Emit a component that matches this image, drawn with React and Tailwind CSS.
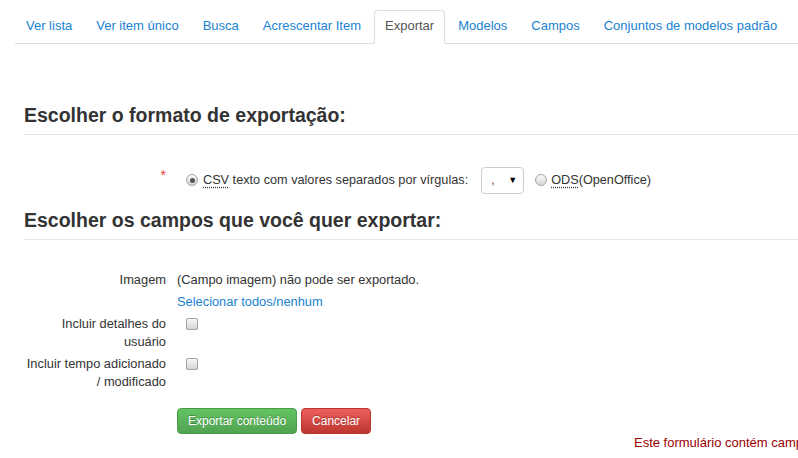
export default function App() {
  const tabs = [
    "Ver lista",
    "Ver item único",
    "Busca",
    "Acrescentar Item",
    "Exportar",
    "Modelos",
    "Campos",
    "Conjuntos de modelos padrão",
  ];

  const Radio = ({ checked, className = "" }) => (
    <span
      className={
        "inline-flex h-[12px] w-[12px] shrink-0 items-center justify-center rounded-full border border-[#a5a5a5] bg-gradient-to-b from-[#fbfbfb] to-[#d4d4d4] " +
        className
      }
    >
      {checked ? <span className="h-[5px] w-[5px] rounded-full bg-[#555]" /> : null}
    </span>
  );

  const Checkbox = () => (
    <span className="ml-[9px] inline-block h-[12px] w-[12px] shrink-0 rounded-[2px] border border-[#a0a0a0] bg-gradient-to-b from-[#f6f6f6] to-[#d6d6d6]" />
  );

  return (
    <div className="h-[458px] w-[798px] overflow-hidden bg-white font-['Liberation_Sans',Arial,sans-serif] text-[13px] leading-[18px] text-[#333]">
      <ul className="ml-[15px] mt-[10px] flex border-b border-[#ddd]">
        {tabs.map((t) => (
          <li key={t} className="-mb-px mr-[2px]">
            {t === "Exportar" ? (
              <span className="block rounded-t-[4px] border border-[#ddd] border-b-transparent bg-white px-[10px] pb-[7px] pt-[5px] leading-[20px] text-[#555]">
                {t}
              </span>
            ) : (
              <span className="block rounded-t-[4px] border border-transparent px-[10px] pb-[7px] pt-[5px] leading-[20px] text-[#1982d1]">
                {t}
              </span>
            )}
          </li>
        ))}
      </ul>

      <div className="pl-[24px]">
        <h2 className="mt-[52px] border-b border-[#e5e5e5] text-[19.5px] font-bold leading-[38px] text-[#333]">
          Escolher o formato de exportação:
        </h2>

        <div className="mt-[31px] flex h-[28px] items-center">
          <div className="flex h-full w-[142px] shrink-0 items-start justify-end">
            <span className="mt-[1.5px] text-[14px] leading-[14px] text-[#e8433f]">*</span>
          </div>
          <div className="ml-[11px] flex items-center text-[12.7px]">
            <Radio checked className="ml-[9px]" />
            <span className="ml-[5px] whitespace-nowrap">
              <span className="underline decoration-dotted decoration-[#333] underline-offset-[3px]">CSV</span> texto com valores separados por vírgulas:
            </span>
            <span className="ml-[13px] flex h-[27px] w-[43px] items-center justify-between rounded-[4px] border border-[#ccc] bg-white pl-[9px] pr-[6px]">
              <span className="text-[#8a4a2a]">,</span>
              <span className="text-[9px] leading-none text-black">▼</span>
            </span>
            <Radio className="ml-[11px]" />
            <span className="ml-[4px] whitespace-nowrap">
              <span className="underline decoration-dotted decoration-[#333] underline-offset-[3px]">ODS</span>(OpenOffice)
            </span>
          </div>
        </div>

        <h2 className="mt-[7px] border-b border-[#e5e5e5] text-[19.5px] font-bold leading-[38px] text-[#333]">
          Escolher os campos que você quer exportar:
        </h2>

        <div className="mt-[31px] flex flex-col gap-[4px] text-[12.85px]">
          <div className="flex">
            <div className="w-[142px] shrink-0 text-right">Imagem</div>
            <div className="ml-[11px]">(Campo imagem) não pode ser exportado.</div>
          </div>
          <div className="flex">
            <div className="w-[142px] shrink-0" />
            <div className="ml-[11px] text-[#1982d1]">Selecionar todos/nenhum</div>
          </div>
          <div className="flex">
            <div className="w-[142px] shrink-0 text-right">Incluir detalhes do usuário</div>
            <div className="ml-[11px] flex h-[18px] items-center">
              <Checkbox />
            </div>
          </div>
          <div className="flex">
            <div className="w-[142px] shrink-0 text-right">Incluir tempo adicionado / modificado</div>
            <div className="ml-[11px] flex h-[18px] items-center">
              <Checkbox />
            </div>
          </div>
        </div>

        <div className="mt-[17px] flex">
          <div className="w-[142px] shrink-0" />
          <div className="ml-[11px] flex gap-[4px] text-[12px]">
            <span className="rounded-[4px] border border-[#4a9a4a] bg-gradient-to-b from-[#62c462] to-[#51a351] px-[10px] py-[3px] leading-[18px] text-white [text-shadow:0_-1px_0_rgba(0,0,0,0.25)]">
              Exportar conteúdo
            </span>
            <span className="rounded-[4px] border border-[#b8352f] bg-gradient-to-b from-[#ee5f5b] to-[#bd362f] px-[10px] py-[3px] leading-[18px] text-white [text-shadow:0_-1px_0_rgba(0,0,0,0.25)]">
              Cancelar
            </span>
          </div>
        </div>

        <div className="whitespace-nowrap pl-[610px] text-[#990000]">
          Este formulário contém campos obrigatórios marcados com *
        </div>
      </div>
    </div>
  );
}
